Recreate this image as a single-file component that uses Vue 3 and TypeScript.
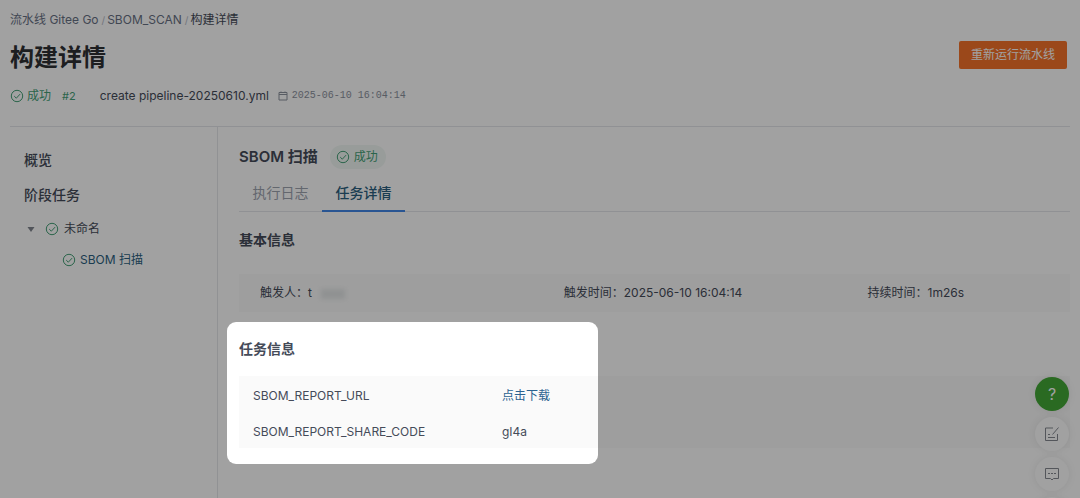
<script setup lang="ts">
import { h, type FunctionalComponent } from 'vue'

const StatusIcon: FunctionalComponent = () =>
  h('svg', { viewBox: '0 0 14 14', width: 14, height: 14, fill: 'none', stroke: 'currentColor', 'aria-hidden': 'true' }, [
    h('circle', { cx: 7, cy: 7, r: 5.7 }),
    h('path', { d: 'M4.2 7.1l2.1 2.1 3.8-4.1' }),
  ])

const basics = [
  { label: '触发人：', value: 't', masked: true },
  { label: '触发时间：', value: '2025-06-10 16:04:14', masked: false },
  { label: '持续时间：', value: '1m26s', masked: false },
]
</script>

<template>
  <div class="page">
    <header class="header">
      <nav class="crumbs" aria-label="breadcrumb">
        <a href="#">流水线 Gitee Go</a><span class="sep">/</span><a href="#">SBOM_SCAN</a><span class="sep">/</span><span class="current">构建详情</span>
      </nav>
      <div class="title-row">
        <h1>构建详情</h1>
        <button type="button" class="rerun">重新运行流水线</button>
      </div>
      <div class="meta">
        <span class="ok"><StatusIcon />成功</span>
        <span class="number">#2</span>
        <span class="commit">create pipeline-20250610.yml</span>
        <svg class="calendar" viewBox="0 0 10 10" width="10" height="10" fill="none" stroke="currentColor" aria-hidden="true">
          <path d="M1 1.500h8v7.500H1zM1 3.500h8M3 .5v1M7 .5v1" />
        </svg>
        <time>2025-06-10 16:04:14</time>
      </div>
    </header>

    <div class="body">
      <aside class="sidebar">
        <a href="#" class="side-main">概览</a>
        <div class="side-main">阶段任务</div>
        <button type="button" class="stage">
          <svg class="caret" viewBox="0 0 8 8" width="8" height="8" aria-hidden="true"><path d="M.5 2h7L4 7z" fill="currentColor" /></svg>
          <StatusIcon class="green" />未命名
        </button>
        <a href="#" class="task"><StatusIcon class="green" />SBOM 扫描</a>
      </aside>

      <main class="main">
        <div class="task-title">
          <h2>SBOM 扫描</h2>
          <span class="badge"><StatusIcon />成功</span>
        </div>
        <div class="tabs" role="tablist">
          <button type="button" role="tab" aria-selected="false">执行日志</button>
          <button type="button" role="tab" aria-selected="true" class="active">任务详情</button>
        </div>

        <section class="basic">
          <h3>基本信息</h3>
          <dl class="basic-list">
            <div v-for="item in basics" :key="item.label">
              <dt>{{ item.label }}</dt>
              <dd>{{ item.value }}<span v-if="item.masked" class="mask"></span></dd>
            </div>
          </dl>
        </section>

        <section class="info">
          <div class="spotlight"></div>
          <h3>任务信息</h3>
          <table>
            <tbody>
              <tr>
                <th scope="row">SBOM_REPORT_URL</th>
                <td><a href="#">点击下载</a></td>
              </tr>
              <tr>
                <th scope="row">SBOM_REPORT_SHARE_CODE</th>
                <td>gI4a</td>
              </tr>
            </tbody>
          </table>
        </section>
      </main>
    </div>

    <div class="floats">
      <button type="button" class="help" aria-label="帮助">?</button>
      <button type="button" aria-label="反馈">
        <svg viewBox="0 0 16 16" width="16" height="16" fill="none" stroke="currentColor" aria-hidden="true">
          <path d="M9 2H1.500v12.500h12V8M14.500 1.500L8.500 8.500M4 8.500h2M4 11.500h7" />
        </svg>
      </button>
      <button type="button" aria-label="评论">
        <svg viewBox="0 0 16 16" width="16" height="16" fill="none" stroke="currentColor" aria-hidden="true">
          <path d="M1.500 2.500h13v10H9.500L8 14l-1.500-1.500h-5z" />
          <path d="M4 7.500h2M7 7.500h2M10 7.500h2" />
        </svg>
      </button>
      <button type="button" aria-label="更多"></button>
    </div>
  </div>
</template>

<style>
body {
  margin: 0;
}
</style>

<style scoped>
.page {
  position: relative;
  height: 100vh;
  overflow: hidden;
  background: #fff;
  color: #454b59;
  font-family: Inter, "Noto Sans CJK SC", sans-serif;
  font-size: 12px;
  line-height: 20px;
}
.page * {
  box-sizing: border-box;
}
a {
  color: inherit;
  text-decoration: none;
}
button {
  border: 0;
  padding: 0;
  background: none;
  color: inherit;
  font: inherit;
  cursor: pointer;
}
h1,
h2,
h3,
dl,
dd {
  margin: 0;
}
.header {
  margin: 0 10px;
  padding: 10px 0 20px;
  border-bottom: 1px solid #e4e6ea;
}
.crumbs {
  color: #687184;
}
.sep {
  margin: 0 2px 0 3px;
  color: #b4bac6;
  font-size: 10px;
}
.current {
  color: #454b59;
}
.title-row {
  display: flex;
  align-items: center;
  justify-content: space-between;
  margin-top: 8px;
  padding-right: 3px;
}
h1 {
  color: #2e3034;
  font-size: 24px;
  line-height: 40px;
  font-weight: 600;
}
.rerun {
  height: 28px;
  margin-bottom: 6px;
  padding: 0 12px;
  border-radius: 2px;
  background: #f5732a;
  color: #fff;
}
.meta {
  display: flex;
  align-items: center;
  margin-top: 8px;
}
.ok {
  display: flex;
  align-items: center;
  gap: 3px;
  color: #45a077;
}
.number {
  margin-left: 11px;
  color: #45a077;
  font-size: 11px;
}
.commit {
  margin-left: 24px;
}
.calendar {
  margin: 0 4px 0 9px;
  color: #8c929e;
}
time {
  color: #8c929e;
  font-family: "Liberation Mono", monospace;
  font-size: 10px;
}
.body {
  display: flex;
}
.sidebar {
  display: flex;
  flex: 0 0 218px;
  flex-direction: column;
  align-items: flex-start;
  height: 380px;
  padding: 23px 0 0 24px;
  border-right: 1px solid #e6e8eb;
}
.side-main {
  margin-bottom: 15px;
  font-size: 14px;
  font-weight: 500;
}
.stage {
  display: flex;
  align-items: center;
  gap: 5px;
  margin: -1px 0 11px 3px;
}
.caret {
  margin-right: 5px;
  color: #81868f;
}
.green {
  color: #45a077;
}
.task {
  display: flex;
  align-items: center;
  gap: 4px;
  margin-left: 38px;
  color: #2c5f80;
}
.main {
  flex: 1;
  min-width: 0;
  padding: 18px 10px 0 21px;
}
.task-title {
  display: flex;
  align-items: center;
  gap: 12px;
}
h2 {
  font-size: 15px;
  line-height: 24px;
  font-weight: 600;
}
.badge {
  display: flex;
  align-items: center;
  gap: 4px;
  height: 24px;
  padding: 0 8px 0 6px;
  border-radius: 12px;
  background: #f1f8f4;
  color: #45a077;
}
.tabs {
  display: flex;
  height: 43px;
  border-bottom: 1px solid #e4e6ea;
}
.tabs button {
  width: 83px;
  height: 43px;
  padding-top: 6px;
  border-bottom: 2px solid transparent;
  color: #9da3af;
  font-size: 14px;
}
.tabs .active {
  border-bottom-color: #4187e8;
  color: #2c5f80;
  font-weight: 500;
}
h3 {
  font-size: 14px;
  line-height: 20px;
  font-weight: 600;
}
.basic {
  margin-top: 18px;
}
.basic-list {
  display: grid;
  grid-template-columns: 3fr 3fr 2fr;
  margin-top: 24px;
  padding: 9px 0 9px 21px;
  background: #fafafa;
}
.basic-list div {
  display: flex;
}
.mask {
  display: inline-block;
  width: 24px;
  height: 10px;
  margin-left: 9px;
  background: #e4e7e8;
  vertical-align: middle;
  filter: blur(2px);
}
.info {
  position: relative;
  margin-top: 27px;
}
.spotlight {
  position: absolute;
  z-index: 2;
  top: -17px;
  left: -12px;
  width: 371px;
  height: 142px;
  border-radius: 9px;
  box-shadow: 0 0 0 2000px rgba(0, 0, 0, 0.37);
  pointer-events: none;
}
table {
  width: 100%;
  margin-top: 17px;
  border-collapse: collapse;
  table-layout: fixed;
  background: #fafafa;
}
th,
td {
  height: 36px;
  padding: 3px 0 0;
  font-weight: 400;
  text-align: left;
}
th {
  width: 263px;
  padding-left: 14px;
}
td a {
  color: #2b6290;
}
.floats {
  position: absolute;
  z-index: 1;
  top: 377px;
  right: 11px;
  display: flex;
  flex-direction: column;
  align-items: center;
  gap: 6px;
}
.floats button {
  display: flex;
  align-items: center;
  justify-content: center;
  width: 34px;
  height: 34px;
  border-radius: 50%;
  background: #fff;
  box-shadow: 0 0 8px rgba(0, 0, 0, 0.08);
  color: #858991;
}
.floats .help {
  background: #43a836;
  color: #fff;
  font-size: 16px;
}
</style>
